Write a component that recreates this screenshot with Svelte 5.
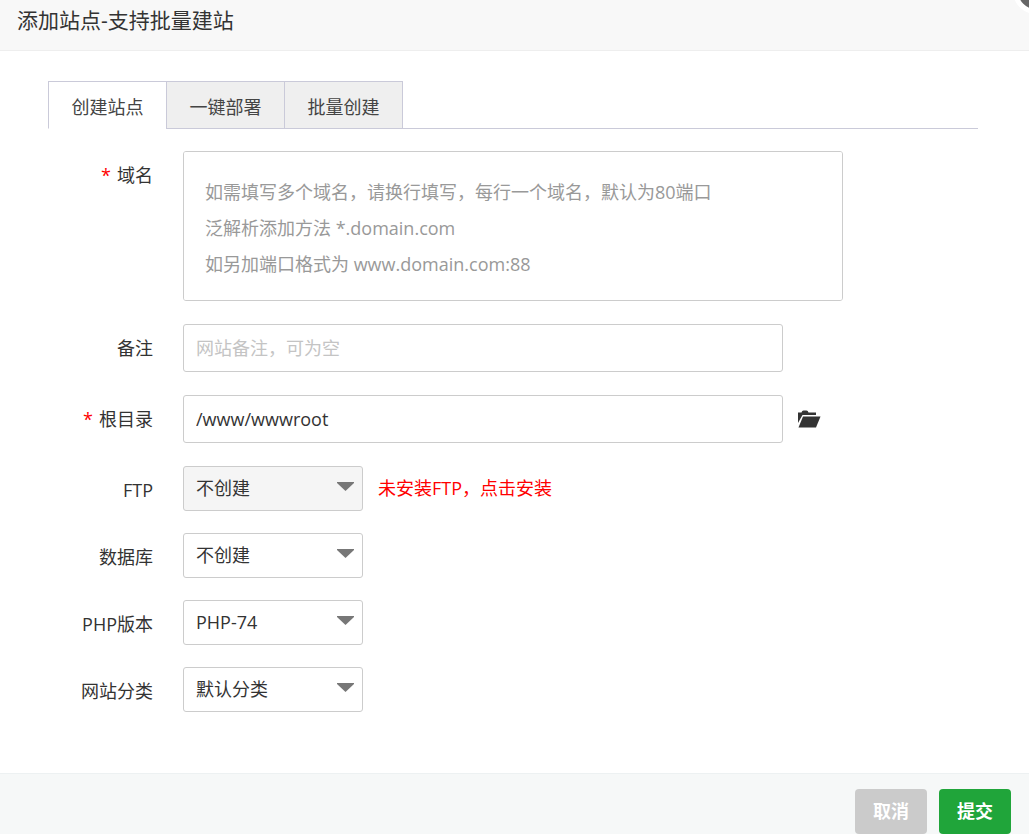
<script lang="ts">
const tabs = ['创建站点', '一键部署', '批量创建']

const selects = [
    { id: 'ftp', label: 'FTP', options: ['不创建', '创建'], muted: true },
    { id: 'database', label: '数据库', options: ['不创建', 'MySQL'] },
    { id: 'php', label: 'PHP版本', options: ['PHP-74', '纯静态'] },
    { id: 'category', label: '网站分类', options: ['默认分类'] },
]

const domainHint = `如需填写多个域名，请换行填写，每行一个域名，默认为80端口
泛解析添加方法 *.domain.com
如另加端口格式为 www.domain.com:88`

let activeTab = $state(0)
let remark = $state('')
let path = $state('/www/wwwroot')
</script>

<div class="dialog">
    <header class="title">添加站点-支持批量建站</header>
    <button class="close" type="button" aria-label="关闭"></button>

    <form class="body" id="site-form">
        <div class="tabs" role="tablist">
            {#each tabs as tab, i}
            <button
                class="tab"
                class:active={activeTab === i}
                type="button"
                role="tab"
                aria-selected={activeTab === i}
                onclick={() => (activeTab = i)}
            >{tab}</button>
            {/each}
        </div>

        <div class="row tall">
            <label class="label" for="domain"><span class="required">*</span>域名</label>
            <textarea class="field domain" id="domain" placeholder={domainHint}></textarea>
        </div>
        <div class="row">
            <label class="label" for="remark">备注</label>
            <input class="field" id="remark" type="text" placeholder="网站备注，可为空" bind:value={remark}>
        </div>
        <div class="row">
            <label class="label" for="path"><span class="required">*</span>根目录</label>
            <input class="field" id="path" type="text" bind:value={path}>
            <button class="folder" type="button" aria-label="选择目录">
                <svg width="23" height="18" viewBox="0 0 23 18">
                    <path d="M0 13V2.500h3.500q.5-2 2-2h3q1.500 0 2 2H18V5H4.500L0 13z" fill="#333" />
                    <path d="M5 6.500h17.500L18 17.500H.500z" fill="#333" />
                </svg>
            </button>
        </div>

        <div class="selects">
            {#each selects as item}
            <div class="row">
                <label class="label" for={item.id}>{item.label}</label>
                <div class="select">
                    <select id={item.id} class:muted={item.muted}>
                        {#each item.options as option}
                        <option>{option}</option>
                        {/each}
                    </select>
                    <svg class="arrow" width="17" height="9" viewBox="0 0 17 9">
                        <path d="M0 0h17v1L8.500 9L0 1z" fill="#777" />
                    </svg>
                </div>
                {#if item.id === 'ftp'}
                <a class="install" href="#install">未安装FTP，点击安装</a>
                {/if}
            </div>
            {/each}
        </div>
    </form>

    <footer class="footer">
        <button class="btn" type="button">取消</button>
        <button class="btn submit" type="submit" form="site-form">提交</button>
    </footer>
</div>

<style>
:global(body) {
    margin: 0;
    background: #fff;
}

.dialog,
button,
input,
select,
textarea {
    font-family: "Open Sans", "Noto Sans CJK SC", sans-serif;
    font-size: 18px;
    color: #333;
    box-sizing: border-box;
}

.dialog {
    position: relative;
    display: flex;
    flex-direction: column;
    min-height: 100vh;
    overflow: hidden;
}

.title {
    padding: 0 17px 10px;
    font-size: 21px;
    line-height: 40px;
    background: #f8f8f8;
    border-bottom: 1px solid #eee;
}

.close {
    position: absolute;
    top: -32px;
    right: -30px;
    width: 46px;
    height: 46px;
    padding: 0;
    border: 5px solid #fff;
    border-radius: 50%;
    background: #666;
    cursor: pointer;
}

.body {
    flex: 1;
    padding: 30px 51px 58px 48px;
}

.tabs {
    display: flex;
    margin-bottom: 22px;
    border-bottom: 1px solid #cacad9;
}

.tab {
    min-width: 119px;
    height: 48px;
    margin: 0 0 -1px -1px;
    padding: 1px 22px 0;
    background: #efefef;
    border: 1px solid #cacad9;
    color: #444;
    cursor: pointer;
}

.tab:first-child {
    margin-left: 0;
}

.tab.active {
    background: #fff;
    border-bottom-color: #fff;
}

.row {
    display: flex;
    align-items: center;
    margin-bottom: 23px;
}

.tall {
    align-items: flex-start;
}

.label {
    flex: none;
    width: 105px;
    margin-right: 30px;
    line-height: 48px;
    text-align: right;
}

.required {
    margin-right: 6px;
    color: #f00;
}

.field {
    width: 100%;
    max-width: 600px;
    height: 48px;
    padding: 0 12px;
    border: 1px solid #ccc;
    border-radius: 3px;
    background: #fff;
    outline: none;
}

.field::placeholder {
    color: #c4c4c4;
}

.domain {
    max-width: 660px;
    height: 150px;
    padding: 22px 21px;
    line-height: 36px;
    resize: none;
}

.domain::placeholder {
    color: #999;
}

.folder {
    display: flex;
    margin-left: 15px;
    padding: 0;
    border: none;
    background: none;
    cursor: pointer;
}

.selects .row {
    align-items: flex-start;
    margin-bottom: 19px;
}

.selects .row:last-child {
    margin-bottom: 0;
}

.select {
    position: relative;
    width: 180px;
}

.select select {
    display: block;
    width: 100%;
    height: 45px;
    padding: 0 12px 2px;
    border: 1px solid #ccc;
    border-radius: 3px;
    background: #fff;
    appearance: none;
}

.select .muted {
    background: #f5f5f5;
}

.arrow {
    position: absolute;
    top: 16px;
    right: 9px;
    pointer-events: none;
}

.install {
    margin-left: 15px;
    line-height: 45px;
    color: #f00;
    text-decoration: none;
}

.footer {
    display: flex;
    justify-content: flex-end;
    gap: 12px;
    padding: 15px 18px 0;
    background: #f6f8f8;
    border-top: 1px solid #edf1f2;
}

.btn {
    width: 72px;
    height: 45px;
    padding: 0 0 3px;
    border: none;
    border-radius: 4px;
    background: #cbcbcb;
    color: #fff;
    font-weight: bold;
    cursor: pointer;
}

.submit {
    background: #20a53a;
}
</style>
